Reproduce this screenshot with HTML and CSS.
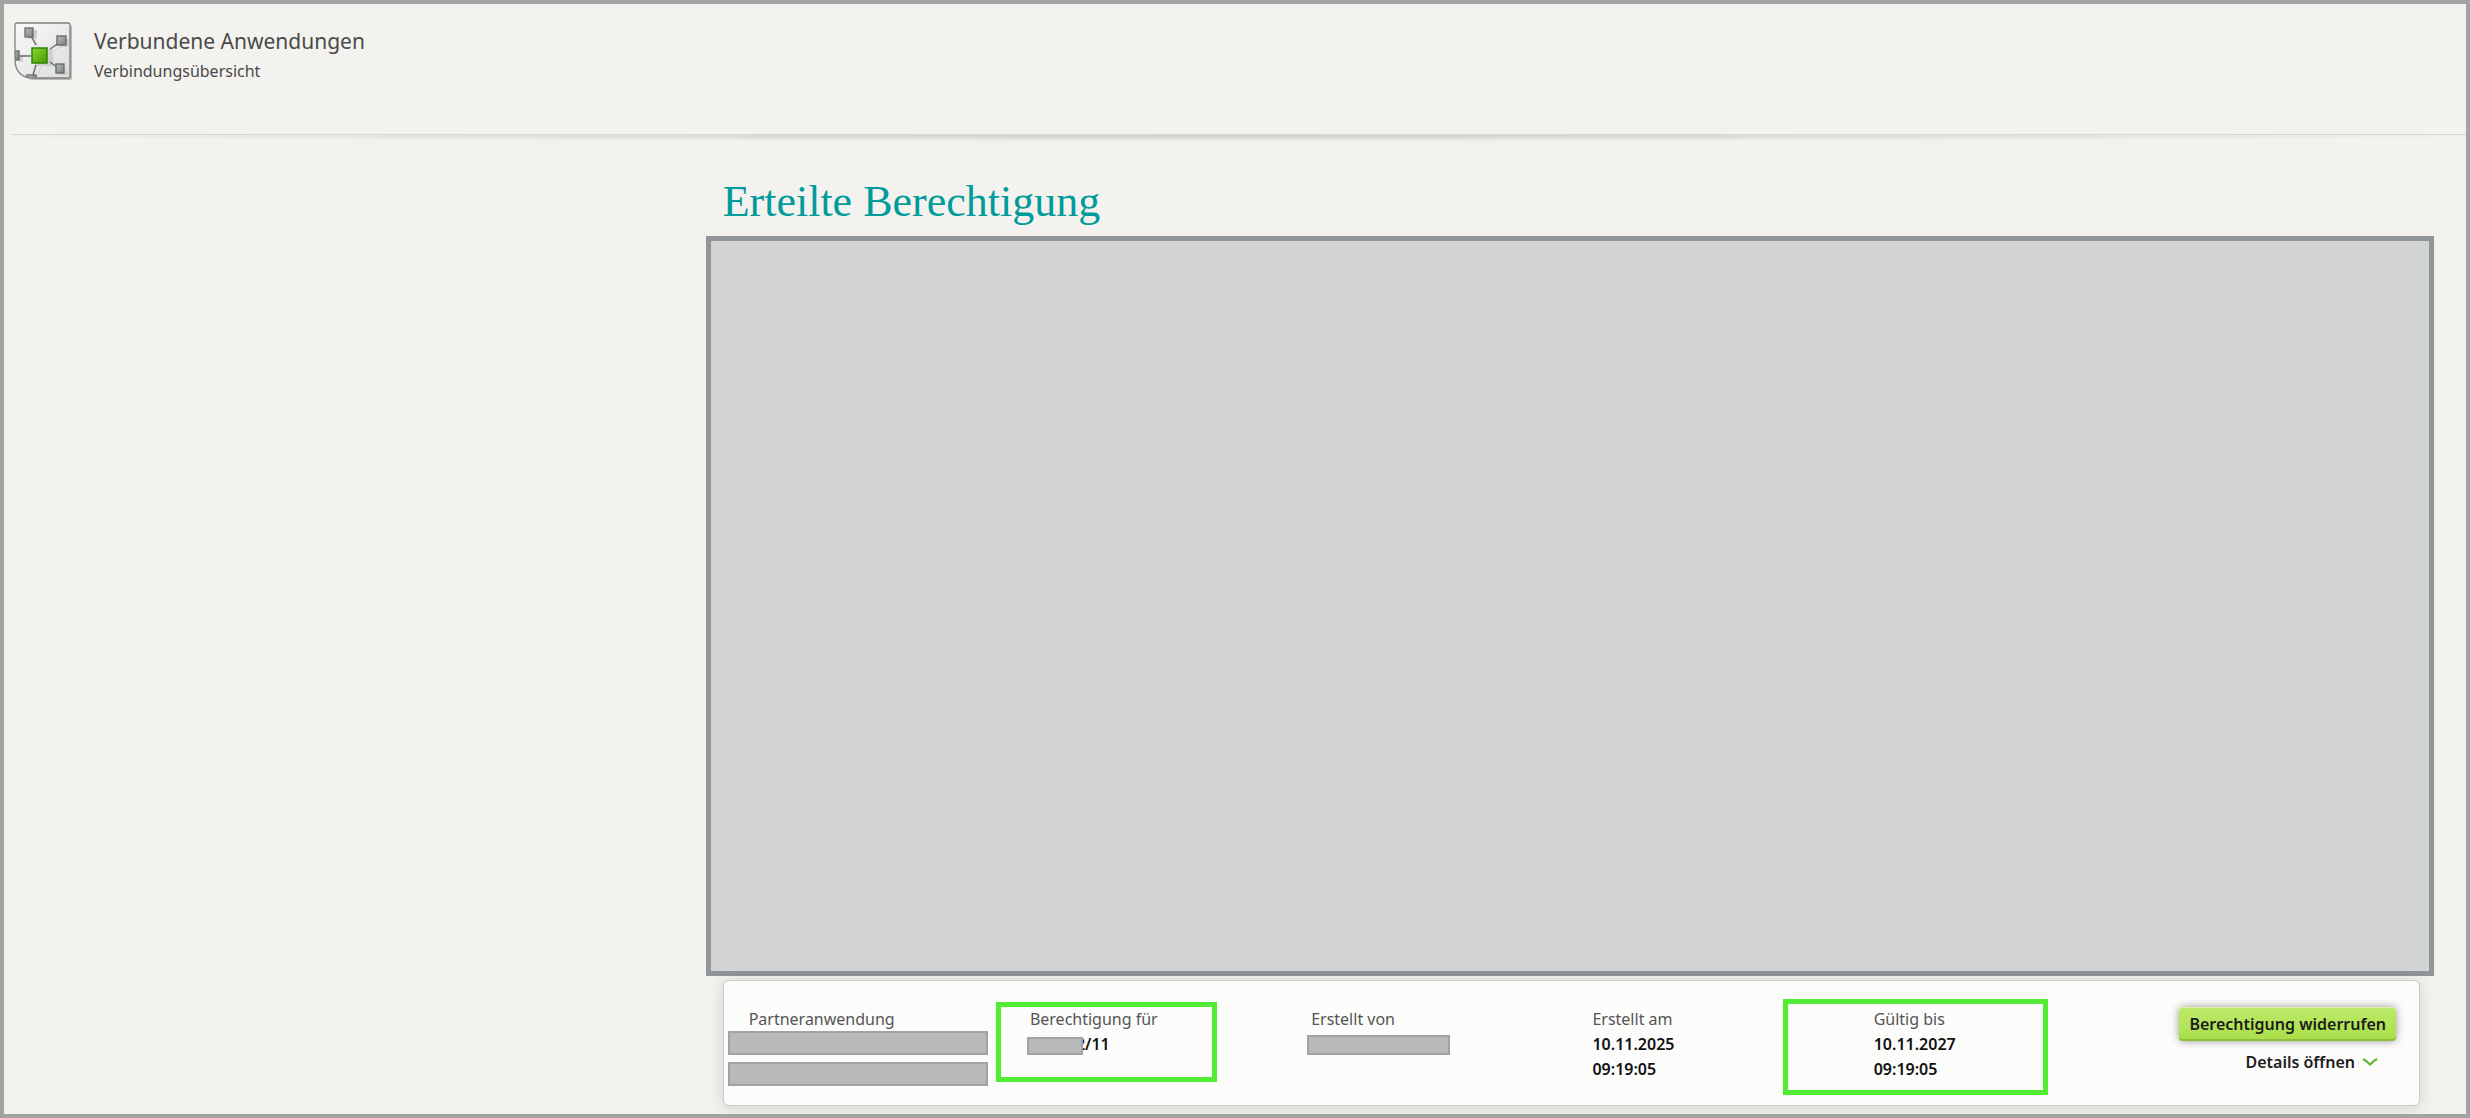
FILE: index.html
```html
<!DOCTYPE html>
<html lang="de">
<head>
<meta charset="utf-8">
<title>Verbundene Anwendungen</title>
<link rel="stylesheet" href="styles.css">
</head>
<body>
<header class="header">
    <svg class="logo" viewBox="0 0 60 60" aria-hidden="true">
        <defs>
            <linearGradient id="bg" x1="0" y1="0" x2="1" y2="1"><stop offset="0" stop-color="#fafafa"/><stop offset="1" stop-color="#dcdcdc"/></linearGradient>
            <linearGradient id="green" x1="0" y1="0" x2="1" y2="1"><stop offset="0" stop-color="#90d52c"/><stop offset="1" stop-color="#449d05"/></linearGradient>
            <linearGradient id="grey" x1="0" y1="0" x2="1" y2="1"><stop offset="0" stop-color="#b9bcbd"/><stop offset="1" stop-color="#7d8182"/></linearGradient>
            <clipPath id="tile"><path d="M3 1H54Q56 1 56 3V54Q56 56 54 56H20Q1 56 1 37V3Q1 1 3 1Z"/></clipPath>
        </defs>
        <path d="M5 3H56Q58 3 58 5V56Q58 58 56 58H22Q3 58 3 39V5Q3 3 5 3Z" fill="#b9b9b6"/>
        <path d="M3 1H54Q56 1 56 3V54Q56 56 54 56H20Q1 56 1 37V3Q1 1 3 1Z" fill="url(#bg)"/>
        <g clip-path="url(#tile)">
            <g fill="#cfcfcf" stroke="#cfcfcf">
                <path d="M14 8h9v9h-9zM46 17h9v8h-9zM45 49h9v4h-9zM5 33h4v7h-4zM21 27h18v17H21z" stroke="none"/>
                <path d="M20 17l5 8M40 29l8-5M27 45l-4 10" fill="none"/>
            </g>
            <path d="M17 14l5 9M36 27l9-6M36 40l7 5M6 34h11M22 43l-3 10" fill="none" stroke="#696e6f" stroke-width="1.5"/>
            <g fill="url(#grey)" stroke="#616769" stroke-width="1.3">
                <rect x="11" y="6" width="8" height="9"/>
                <rect x="43" y="14" width="9" height="9"/>
                <rect x="42" y="42" width="8" height="9"/>
                <rect x="-4" y="29" width="9" height="9"/>
                <rect x="13" y="53" width="9" height="9"/>
            </g>
            <rect x="18" y="26" width="15" height="15" fill="url(#green)" stroke="#2f8503" stroke-width="1.5"/>
        </g>
        <path d="M3 1H54Q56 1 56 3V54Q56 56 54 56H20Q1 56 1 37V3Q1 1 3 1Z" fill="none" stroke="#808080" stroke-width="1.3"/>
    </svg>
    <div class="header-text">
        <h1 class="title">Verbundene Anwendungen</h1>
        <p class="subtitle">Verbindungsübersicht</p>
    </div>
</header>
<div class="divider"></div>

<main class="content">
    <h2 class="heading">Erteilte Berechtigung</h2>
    <div class="panel"></div>

    <section class="card">
        <div class="field">
            <dl>
                <dt>Partneranwendung</dt>
                <dd><span class="mask mask-partner"></span><span class="mask mask-partner second"></span></dd>
            </dl>
        </div>
        <div class="field">
            <dl>
                <dt>Berechtigung für</dt>
                <dd class="number">2/11<span class="mask mask-number"></span></dd>
            </dl>
            <span class="marker marker-small"></span>
        </div>
        <div class="field">
            <dl>
                <dt>Erstellt von</dt>
                <dd><span class="mask mask-creator"></span></dd>
            </dl>
        </div>
        <div class="field">
            <dl>
                <dt>Erstellt am</dt>
                <dd>10.11.2025</dd>
                <dd>09:19:05</dd>
            </dl>
        </div>
        <div class="field">
            <dl>
                <dt>Gültig bis</dt>
                <dd>10.11.2027</dd>
                <dd>09:19:05</dd>
            </dl>
            <span class="marker marker-large"></span>
        </div>
        <div class="actions">
            <button type="button" class="revoke">Berechtigung widerrufen</button>
            <button type="button" class="details">Details öffnen
                <svg class="chevron" viewBox="0 0 16 10" aria-hidden="true"><path d="M1 2Q5 4 8 7.500Q11 4 15 2" fill="none" stroke="#5cb531" stroke-width="2"/></svg>
            </button>
        </div>
    </section>
</main>
</body>
</html>
```

FILE: styles.css
```css
* {
  box-sizing: border-box;
}
body {
  display: flex;
  flex-direction: column;
  min-height: 100vh;
  margin: 0;
  border: 4px solid #a2a3a2;
  background: #f3f2ee;
  color: #4a4a4a;
  font-family: "Noto Sans", "Open Sans", sans-serif;
  font-size: 16px;
}
h1, h2, p, dl, dd {
  margin: 0;
  font-weight: 400;
}

/* header */
.header {
  display: flex;
  gap: 20px;
  height: 130px;
  padding: 18px 10px;
}
.logo {
  width: 60px;
  height: 60px;
}
.title {
  padding-top: 3px;
  font-size: 21px;
  line-height: 32px;
}
.subtitle {
  font-size: 16px;
  line-height: 28px;
}
.divider {
  height: 8px;
  margin-left: 8px;
  border-top: 1px solid #d9d8d4;
  background: radial-gradient(ellipse 55% 100% at 50% 0, #cecdc8, transparent);
}

/* content */
.content {
  display: flex;
  flex: 1;
  flex-direction: column;
  margin-left: 28.5%;
  padding: 36px 32px 8px 0;
}
.heading {
  padding-left: 17px;
  color: #009b9b;
  font-family: "Liberation Serif", serif;
  font-size: 44px;
  line-height: 48px;
}
.panel {
  flex: 1;
  min-height: 200px;
  margin-top: 10px;
  border: 5px solid #929598;
  background: #d1d3d4;
}

/* permission card */
.card {
  display: grid;
  grid-template-columns: repeat(5, 7fr) 6fr;
  min-height: 126px;
  margin: 4px 14px 0 17px;
  padding: 26px 23px 0 25px;
  border: 1px solid #cbccc9;
  border-radius: 6px;
  background: #fcfcfa;
  box-shadow: 0 2px 16px rgba(0, 0, 0, 0.14);
}
.field {
  position: relative;
  line-height: 25px;
}
.field dt {
  color: #555;
}
.field dd {
  color: #111;
  font-weight: 600;
}
.number {
  padding-left: 46px;
}
.mask {
  position: absolute;
  border: 2px solid #a2a2a2;
  background: #b9b9b9;
}
.mask-partner {
  top: 24px;
  left: -21px;
  width: 260px;
  height: 24px;
}
.mask-partner.second {
  top: 55px;
}
.mask-number {
  top: 30px;
  left: -3px;
  width: 56px;
  height: 18px;
}
.mask-creator {
  top: 28px;
  left: -4px;
  width: 143px;
  height: 20px;
}
.marker {
  position: absolute;
  border: 5px solid #52ec34;
}
.marker-small {
  top: -5px;
  left: -34px;
  width: 221px;
  height: 80px;
}
.marker-large {
  top: -8px;
  left: -91px;
  width: 265px;
  height: 96px;
}

/* actions */
.actions {
  display: flex;
  flex-direction: column;
  align-items: flex-end;
  gap: 10px;
}
.revoke,
.details {
  border: 0;
  color: #1c1c1c;
  font: inherit;
  font-weight: 600;
  white-space: nowrap;
}
.revoke {
  height: 34px;
  padding: 0 10px;
  border-radius: 4px;
  background: linear-gradient(#bdea69, #a9df49);
  box-shadow: 0 0 8px rgba(0, 0, 0, 0.4), inset 0 -2px #8fbe3d, inset 0 1px #dcf5ac;
}
.details {
  display: flex;
  align-items: center;
  gap: 7px;
  padding: 0 18px;
  background: none;
}
.chevron {
  width: 16px;
  height: 10px;
}
```
